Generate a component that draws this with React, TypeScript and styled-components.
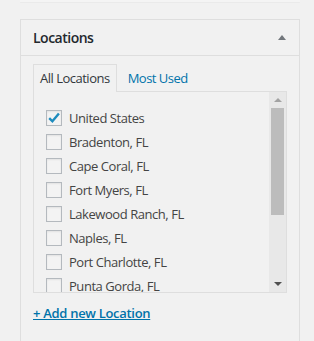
import React from "react";
import styled, { createGlobalStyle } from "styled-components";

const Global = createGlobalStyle`
  html, body { margin: 0; padding: 0; background: #f1f1f1; }
  body { font-family: "Open Sans", "Noto Sans", sans-serif; color: #444; }
  * { box-sizing: border-box; }
`;

const Page = styled.div`
  width: 314px;
  height: 341px;
  overflow: hidden;
  padding: 0 14px 0 20px;
`;

const PrevBox = styled.div`
  height: 2px;
  background: #f4f4f4;
  box-shadow: 0 1px 1px rgba(0, 0, 0, 0.03);
`;

const PostBox = styled.section`
  margin-top: 17px;
  border: 1px solid #dedede;
  border-bottom: none;
  height: 330px;
  background: #f1f1f1;
`;

const Header = styled.div`
  height: 36px;
  display: flex;
  align-items: center;
  justify-content: space-between;
  padding: 0 12px 1px 12px;
  border-bottom: 1px solid #dedede;
`;

const Title = styled.h2`
  margin: 0;
  font-size: 14px;
  font-weight: 600;
  letter-spacing: -0.5px;
  color: #23282d;
`;

const Toggle = styled.span`
  width: 0;
  height: 0;
  margin-right: 1px;
  border-left: 4.5px solid transparent;
  border-right: 4.5px solid transparent;
  border-bottom: 5px solid #72777c;
`;

const Inside = styled.div`
  padding: 8px 12px 0 12px;
`;

const Tabs = styled.ul`
  list-style: none;
  margin: 0;
  padding: 0;
  display: flex;
  align-items: stretch;
  height: 27px;
`;

const Tab = styled.li<{ $active?: boolean }>`
  display: flex;
  align-items: center;
  padding: 0 6px 1px 6px;
  font-size: 13px;
  letter-spacing: -0.5px;
  border: 1px solid ${(p) => (p.$active ? "#dedede" : "transparent")};
  border-bottom: none;
  background: #f1f1f1;
  margin-bottom: ${(p) => (p.$active ? "-1px" : "0")};
  height: ${(p) => (p.$active ? "28px" : "27px")};
  position: relative;
  z-index: ${(p) => (p.$active ? 1 : 0)};
  color: ${(p) => (p.$active ? "#32373c" : "#0073aa")};
  margin-left: ${(p) => (p.$active ? "0" : "4px")};
`;

const Panel = styled.div`
  display: flex;
  height: 202px;
  width: 254px;
  border: 1px solid #dedede;
  background: #f1f1f1;
`;

const List = styled.ul`
  flex: 1;
  list-style: none;
  margin: 0;
  padding: 14px 0 0 12px;
  overflow: hidden;
`;

const Item = styled.li`
  display: flex;
  align-items: center;
  height: 24px;
  font-size: 13px;
  letter-spacing: -0.45px;
  color: #444;
  white-space: nowrap;
`;

const Box = styled.span`
  width: 16px;
  height: 16px;
  flex: none;
  border: 1px solid #b4b9be;
  background: #f3f3f3;
  margin-right: 7px;
  display: flex;
  align-items: center;
  justify-content: center;
  box-shadow: inset 0 1px 2px rgba(0, 0, 0, 0.07);
`;

const Scrollbar = styled.div`
  width: 17px;
  flex: none;
  background: #e8e8e8;
  display: flex;
  flex-direction: column;
  align-items: center;
`;

const Arrow = styled.span<{ $down?: boolean; $dark?: boolean }>`
  height: 16px;
  width: 17px;
  flex: none;
  display: flex;
  align-items: center;
  justify-content: center;
  &::after {
    content: "";
    width: 0;
    height: 0;
    border-left: 4px solid transparent;
    border-right: 4px solid transparent;
    ${(p) =>
      p.$down
        ? `border-top: 4px solid ${p.$dark ? "#505050" : "#a3a3a3"};`
        : `border-bottom: 4px solid ${p.$dark ? "#505050" : "#a3a3a3"};`}
  }
`;

const Track = styled.div`
  flex: 1;
  width: 13px;
  display: flex;
  flex-direction: column;
`;

const Thumb = styled.div`
  background: #bcbcbc;
  width: 13px;
`;

const AddLink = styled.a`
  display: inline-block;
  margin-top: 11px;
  font-size: 13px;
  font-weight: 600;
  letter-spacing: -0.3px;
  color: #0073aa;
  text-decoration: underline;
`;

const Check = () => (
  <svg width="14" height="14" viewBox="0 0 14 14">
    <path d="M2.2 7.2 L5.4 10.3 L11.9 2.6" fill="none" stroke="#1e8cbe" strokeWidth="2.4" />
  </svg>
);

const items = [
  { name: "United States", checked: true },
  { name: "Bradenton, FL" },
  { name: "Cape Coral, FL" },
  { name: "Fort Myers, FL" },
  { name: "Lakewood Ranch, FL" },
  { name: "Naples, FL" },
  { name: "Port Charlotte, FL" },
  { name: "Punta Gorda, FL" },
];

export default function App() {
  return (
    <>
      <Global />
      <Page>
        <PrevBox />
        <PostBox>
          <Header>
            <Title>Locations</Title>
            <Toggle />
          </Header>
          <Inside>
            <Tabs>
              <Tab $active>All Locations</Tab>
              <Tab>Most Used</Tab>
            </Tabs>
            <Panel>
              <List>
                {items.map((it) => (
                  <Item key={it.name}>
                    <Box>{it.checked && <Check />}</Box>
                    {it.name}
                  </Item>
                ))}
              </List>
              <Scrollbar>
                <Arrow />
                <Track>
                  <Thumb style={{ height: "107px" }} />
                </Track>
                <Arrow $down $dark />
              </Scrollbar>
            </Panel>
            <AddLink href="#">+ Add new Location</AddLink>
          </Inside>
        </PostBox>
      </Page>
    </>
  );
}
